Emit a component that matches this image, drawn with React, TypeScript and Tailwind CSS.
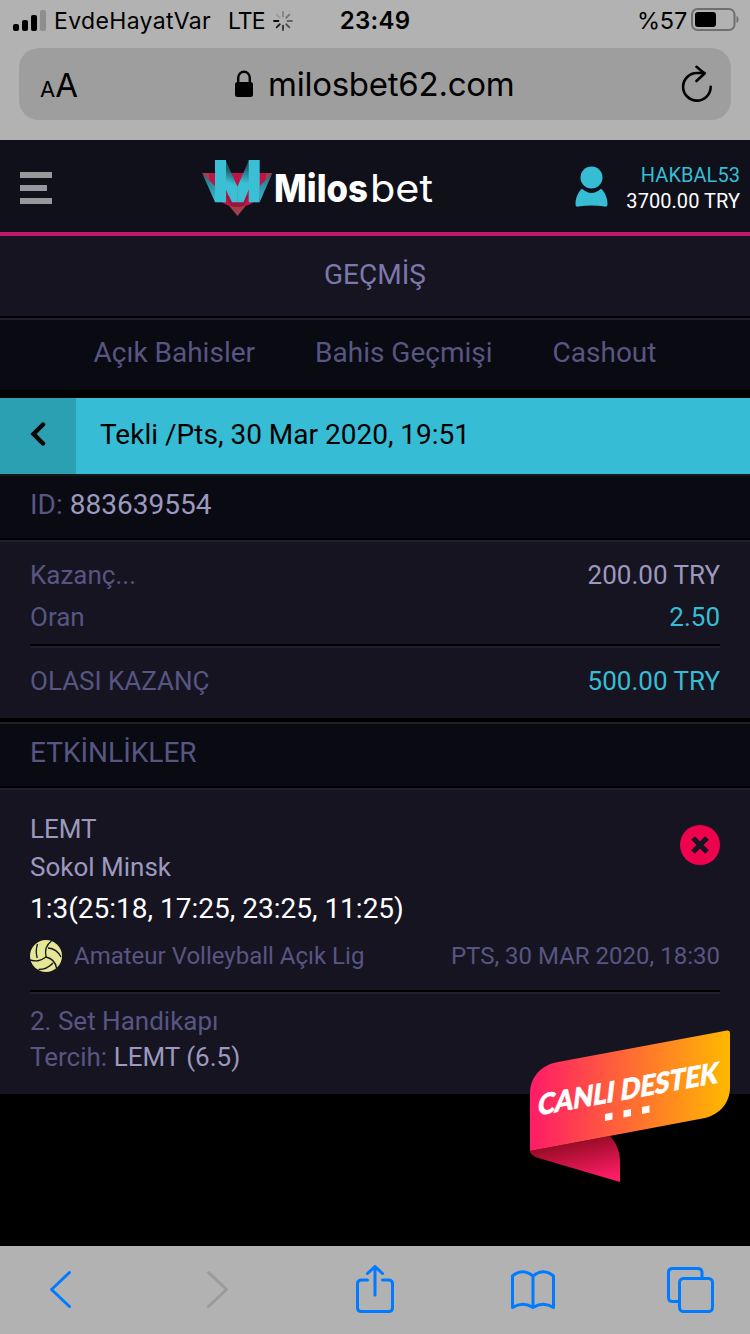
import React from "react";

const Signal = () => (
  <svg className="shrink-0" width="34" height="22" viewBox="0 0 34 22">
    <rect x="0" y="14" width="6" height="7" rx="2" />
    <rect x="9" y="10" width="6" height="11" rx="2" />
    <rect x="18" y="5" width="6" height="16" rx="2" />
    <rect x="27" y="0" width="6" height="21" rx="2" fill="#8e8e8e" />
  </svg>
);

const spokes = [0.28, 0.35, 0.45, 0.55, 0.75, 0.85, 0.95, 0.12];

const Spinner = () => (
  <svg className="shrink-0" width="20" height="20" viewBox="-10 -10 20 20">
    {spokes.map((o, i) => (
      <line
        key={i}
        x1="0"
        y1="-4.6"
        x2="0"
        y2="-9"
        stroke="#000"
        strokeOpacity={o}
        strokeWidth="1.8"
        strokeLinecap="round"
        transform={`rotate(${i * 45})`}
      />
    ))}
  </svg>
);

const Battery = () => (
  <svg width="49" height="24" viewBox="0 0 49 24">
    <rect x="2" y="1" width="42.5" height="21" rx="5.5" fill="none" stroke="#6f6f6f" strokeWidth="2" />
    <rect x="5" y="4" width="21" height="15" rx="3" />
    <path d="M46.500 8c1.400.6 2 1.700 2 3.500S47.900 14.400 46.500 15z" fill="#6f6f6f" />
  </svg>
);

const Logo = () => (
  <svg width="232" height="60" viewBox="202 158 232 60">
    <defs>
      <linearGradient id="foldLeft" gradientUnits="userSpaceOnUse" x1="233" y1="171" x2="229" y2="183">
        <stop offset="0" stopColor="#1f5a68" />
        <stop offset="1" stopColor="#3abfd5" />
      </linearGradient>
      <linearGradient id="foldRight" gradientUnits="userSpaceOnUse" x1="247" y1="166" x2="243" y2="183">
        <stop offset="0" stopColor="#1f5a68" />
        <stop offset="1" stopColor="#3abfd5" />
      </linearGradient>
      <linearGradient id="side" x1="0" y1="0" x2="0" y2="1">
        <stop offset="0" stopColor="#256f80" />
        <stop offset="1" stopColor="#3abfd5" />
      </linearGradient>
    </defs>
    <path d="M202 173H272.5L237.5 216z" fill="#a03f4d" />
    <path d="M209 173H266C266 190 257 207 237.500 207S209 190 209 173z" fill="#bf1446" />
    <path d="M226 196H249L243 206Q237 208 231 206z" fill="#99163a" />
    <path d="M202.500 174L215 186V202z" fill="url(#side)" />
    <path d="M272 174L259.700 186V202z" fill="url(#side)" />
    <path d="M225.500 160L237.600 187V202.300H232L225.500 189z" fill="url(#foldLeft)" />
    <path d="M249 160L237.300 187V202.300H243.500L249 189z" fill="url(#foldRight)" />
    <rect x="215" y="160" width="11" height="42.3" fill="#3abfd5" />
    <rect x="248.7" y="160" width="11" height="42.3" fill="#3abfd5" />
    <text x="274" y="202" fontSize="38" fontWeight="800" fill="#fff" textLength="94" lengthAdjust="spacingAndGlyphs" fontFamily="Inter, sans-serif">Milos</text>
    <text x="370" y="202" fontSize="38" fontWeight="400" fill="#fff" textLength="63" lengthAdjust="spacingAndGlyphs" fontFamily="Inter, sans-serif">bet</text>
  </svg>
);

const User = () => (
  <svg width="34" height="42" viewBox="0 0 34 42" fill="#36bdd3">
    <circle cx="16.5" cy="11.5" r="11" />
    <path d="M7 22.700C10 25 13 27 16.500 27S23 25 26 22.700C30 26 32.500 32 32.500 38C32.500 40.500 31.500 41 29.500 40.600C21 39.200 12 39.200 3.500 40.600C1.500 41 .500 40.500 .500 38C.500 32 3 26 7 22.700z" />
  </svg>
);

const Volleyball = () => (
  <svg width="32" height="32" viewBox="0 0 32 32">
    <circle cx="16" cy="16" r="16" fill="#e5e794" />
    <g fill="none" stroke="#161421" strokeWidth="1.3">
      <path d="M16 17C14.500 10 16 5 21.500 1" />
      <path d="M16 17C10 21.500 6 21.500 0 20" />
      <path d="M16 17C22.500 18.500 25.500 22 26.500 28" />
      <path d="M7.200 18C5.800 13 6 8.500 7.500 4" />
      <path d="M18 8C24 8.500 28.500 12 31 17" />
      <path d="M23 23C19 27.500 14 29.500 8.500 29.500" />
    </g>
  </svg>
);

const Banner = () => (
  <svg width="200" height="152" viewBox="530 1030 200 152">
    <defs>
      <linearGradient id="ribbon" x1="0" x2="1" y1="0" y2="0">
        <stop offset="0.03" stopColor="#ff1f65" />
        <stop offset="0.5" stopColor="#ff6b33" />
        <stop offset="1" stopColor="#ffb900" />
      </linearGradient>
      <linearGradient id="tail" x1="0.25" y1="0" x2="0.65" y2="1">
        <stop offset="0.1" stopColor="#8d0a1e" />
        <stop offset="1" stopColor="#ff1c68" />
      </linearGradient>
    </defs>
    <path d="M530 1151L610 1136C617 1144 620 1152 620 1161V1182L540 1158.500C534 1157 530 1154 530 1151z" fill="url(#tail)" />
    <path d="M530 1094C530 1077 541 1065 558 1062L727 1030.500Q730 1030 730 1033V1087C730 1103 720 1114 705 1118L530 1151z" fill="url(#ribbon)" />
    <text transform="translate(537 1115.5) skewY(-10.3) skewX(-7)" fontSize="28.5" fontWeight="900" fill="#fff" stroke="#fff" strokeWidth="0.7" textLength="180" lengthAdjust="spacingAndGlyphs" fontFamily="Lato, sans-serif">CANLI DESTEK</text>
    <path d="M605 1114l7.500-1.400v7l-7.500 1.400zM623.500 1110.500l7.500-1.400v7l-7.500 1.400zM642 1107l7.500-1.400v7l-7.500 1.400z" fill="#fff" />
  </svg>
);

const Groove = ({ className = "" }: { className?: string }) => (
  <div className={`h-1 shrink-0 border-t-2 border-black bg-[#20202a] ${className}`} />
);

export default function App() {
  return (
    <div className="relative flex h-[1334px] w-[750px] flex-col overflow-hidden bg-black font-['Roboto',sans-serif] text-[26px] whitespace-nowrap text-[#585582]">
      <div className="flex h-[140px] shrink-0 flex-col bg-[#b2b2b2] font-['Inter',sans-serif] text-black">
        <div className="grid h-12 grid-cols-[290px_144px_292px] pr-[11px] pb-1.5 pl-[13px] text-2xl leading-[42px]">
          <div className="flex items-center">
            <Signal />
            <span className="ml-[7px] w-[174px] shrink-0 text-[23px] tracking-[0.35px]">EvdeHayatVar</span>
            <span className="w-[45px] shrink-0 text-[23px] tracking-[-1px]">LTE</span>
            <Spinner />
          </div>
          <div className="text-center font-semibold tracking-[0.3px]">23:49</div>
          <div className="flex items-center justify-end gap-[3px]">
            <span className="text-[23.5px] tracking-[-0.2px]">%57</span>
            <div className="pb-0.5">
              <Battery />
            </div>
          </div>
        </div>
        <div className="mx-[19px] flex h-[72px] items-center rounded-[20px] bg-[#9e9e9e] pr-[18px] pl-[21px]">
          <div className="flex w-[194px] items-baseline pt-1">
            <span className="text-[22px]">A</span>
            <span className="text-[33px]">A</span>
          </div>
          <svg width="20" height="28" viewBox="0 0 20 28">
            <rect x="1" y="12" width="18" height="15" rx="2.5" />
            <path d="M4.200 13V8a5.800 6.300 0 0 1 11.600 0v5" fill="none" stroke="#000" strokeWidth="2.4" />
          </svg>
          <span className="ml-[14px] flex-1 text-[33px] leading-10 tracking-[-0.25px]">milosbet62.com</span>
          <svg width="32" height="38" viewBox="0 0 32 38" fill="none" stroke="#000" strokeWidth="2.6" strokeLinecap="round" strokeLinejoin="round">
            <path d="M29.700 21.800A13.800 13.800 0 1 1 16 8H23.500" />
            <path d="M15.500 1.800L23.500 8.500L15.500 16" />
          </svg>
        </div>
      </div>

      <header className="flex h-24 shrink-0 items-center border-b-4 border-[#c4166a] bg-[#10101b] pr-2.5 pl-5">
        <div className="mt-1 flex h-8 w-8 flex-col justify-between">
          <div className="h-1.5 bg-[#98979c]" />
          <div className="h-1.5 w-[27px] bg-[#98979c]" />
          <div className="h-1.5 bg-[#98979c]" />
        </div>
        <div className="ml-[150px] pt-1">
          <Logo />
        </div>
        <div className="ml-auto flex items-center">
          <div className="pt-0.5">
            <User />
          </div>
          <div className="ml-[17px] pt-1 text-right text-[20px] leading-[26px] tracking-[0.05px]">
            <div className="text-[#36bdd3]">HAKBAL53</div>
            <div className="text-white">3700.00 TRY</div>
          </div>
        </div>
      </header>

      <h1 className="flex h-20 shrink-0 items-center justify-center bg-[#161421] pb-0.5 text-[28px] text-[#7b78ab]">GEÇMİŞ</h1>
      <Groove />
      <nav className="flex h-[70px] shrink-0 items-center justify-center gap-[60px] bg-[#0a0a12] pb-1 text-[28px]">
        <span>Açık Bahisler</span>
        <span>Bahis Geçmişi</span>
        <span>Cashout</span>
      </nav>
      <div className="mt-2 flex h-[76px] shrink-0 items-center bg-[#36bdd5] text-[28px] text-black">
        <div className="flex h-full w-[76px] items-center justify-center bg-[#2ca0b3] pb-1">
          <svg width="16" height="26" viewBox="0 0 16 26" fill="none" stroke="#000" strokeWidth="4.4" strokeLinecap="round">
            <path d="M13 3.500L3.500 13L13 22.500" />
          </svg>
        </div>
        <span className="ml-6 pb-0.5">Tekli /Pts, 30 Mar 2020, 19:51</span>
      </div>
      <div className="flex h-16 shrink-0 items-center gap-[7px] border-t-2 border-[#17181d] bg-[#0a0a12] px-[30px] pb-1 text-[28px]">
        <span>ID:</span>
        <span className="text-[#9c99bf]">883639554</span>
      </div>
      <Groove />
      <section className="flex h-[176px] shrink-0 flex-col bg-[#161421] px-[30px] pt-3">
        <div className="flex justify-between leading-[42px]">
          <span>Kazanç...</span>
          <span className="text-[#9c99bf]">200.00 TRY</span>
        </div>
        <div className="flex justify-between leading-[42px]">
          <span>Oran</span>
          <span className="text-[#36bdd3]">2.50</span>
        </div>
        <Groove className="mt-1.5" />
        <div className="flex justify-between leading-[66px]">
          <span>OLASI KAZANÇ</span>
          <span className="text-[#36bdd3]">500.00 TRY</span>
        </div>
      </section>
      <Groove className="mt-0.5" />
      <h2 className="flex h-[62px] shrink-0 items-center bg-[#0a0a12] px-[30px] pb-1 text-[28px]">ETKİNLİKLER</h2>
      <Groove />
      <section className="flex h-[304px] shrink-0 flex-col bg-[#161421] px-[30px] pt-5">
        <div className="flex justify-between text-[#9c99bf]">
          <div className="leading-[38px]">
            <div>LEMT</div>
            <div>Sokol Minsk</div>
          </div>
          <svg className="mt-[15px]" width="40" height="40" viewBox="0 0 40 40">
            <circle cx="20" cy="20" r="20" fill="#ed034d" />
            <path d="M13 13L27 27M27 13L13 27" stroke="#161421" strokeWidth="5.2" />
          </svg>
        </div>
        <div className="mt-[3px] text-[28px] leading-10 text-white">1:3(25:18, 17:25, 23:25, 11:25)</div>
        <div className="mt-[11px] flex h-8 items-center text-2xl">
          <Volleyball />
          <span className="ml-3">Amateur Volleyball Açık Lig</span>
          <span className="ml-auto">PTS, 30 MAR 2020, 18:30</span>
        </div>
        <Groove className="mt-[18px]" />
        <div className="mt-[9px] leading-9">
          <div>2. Set Handikapı</div>
          <div>
            Tercih: <span className="text-[#9c99bf]">LEMT (6.5)</span>
          </div>
        </div>
      </section>

      <footer className="mt-auto h-[88px] shrink-0 bg-[#b2b2b2]">
        <svg width="750" height="88" viewBox="0 1246 750 88" fill="none" stroke="#007aff" strokeWidth="3" strokeLinecap="round" strokeLinejoin="round">
          <path d="M69.500 1272.500L51.500 1289.500L69.500 1306.500" />
          <path d="M208.500 1272.500L226.500 1289.500L208.500 1306.500" stroke="#9b9b9b" />
          <path d="M367.500 1280H361.500Q357.500 1280 357.500 1284V1307.500Q357.500 1311.500 361.500 1311.500H388.500Q392.500 1311.500 392.500 1307.500V1284Q392.500 1280 388.500 1280H382.500M375 1295V1267.500M367.500 1273.500L375 1266.500L382.500 1273.500" />
          <path d="M533 1276Q522.500 1267.500 512.500 1276V1307.500Q522.500 1301 533 1307.500Q543.500 1301 553.500 1307.500V1276Q543.500 1267.500 533 1276V1307.500" />
          <rect x="679.5" y="1278.5" width="33" height="33" rx="4" />
          <path d="M678 1301.500H672.500Q668.500 1301.500 668.500 1297.500V1272.500Q668.500 1268.500 672.500 1268.500H697.500Q702 1268.500 702 1272.500V1277" />
        </svg>
      </footer>
      <div className="absolute top-[1030px] left-[530px]">
        <Banner />
      </div>
    </div>
  );
}
